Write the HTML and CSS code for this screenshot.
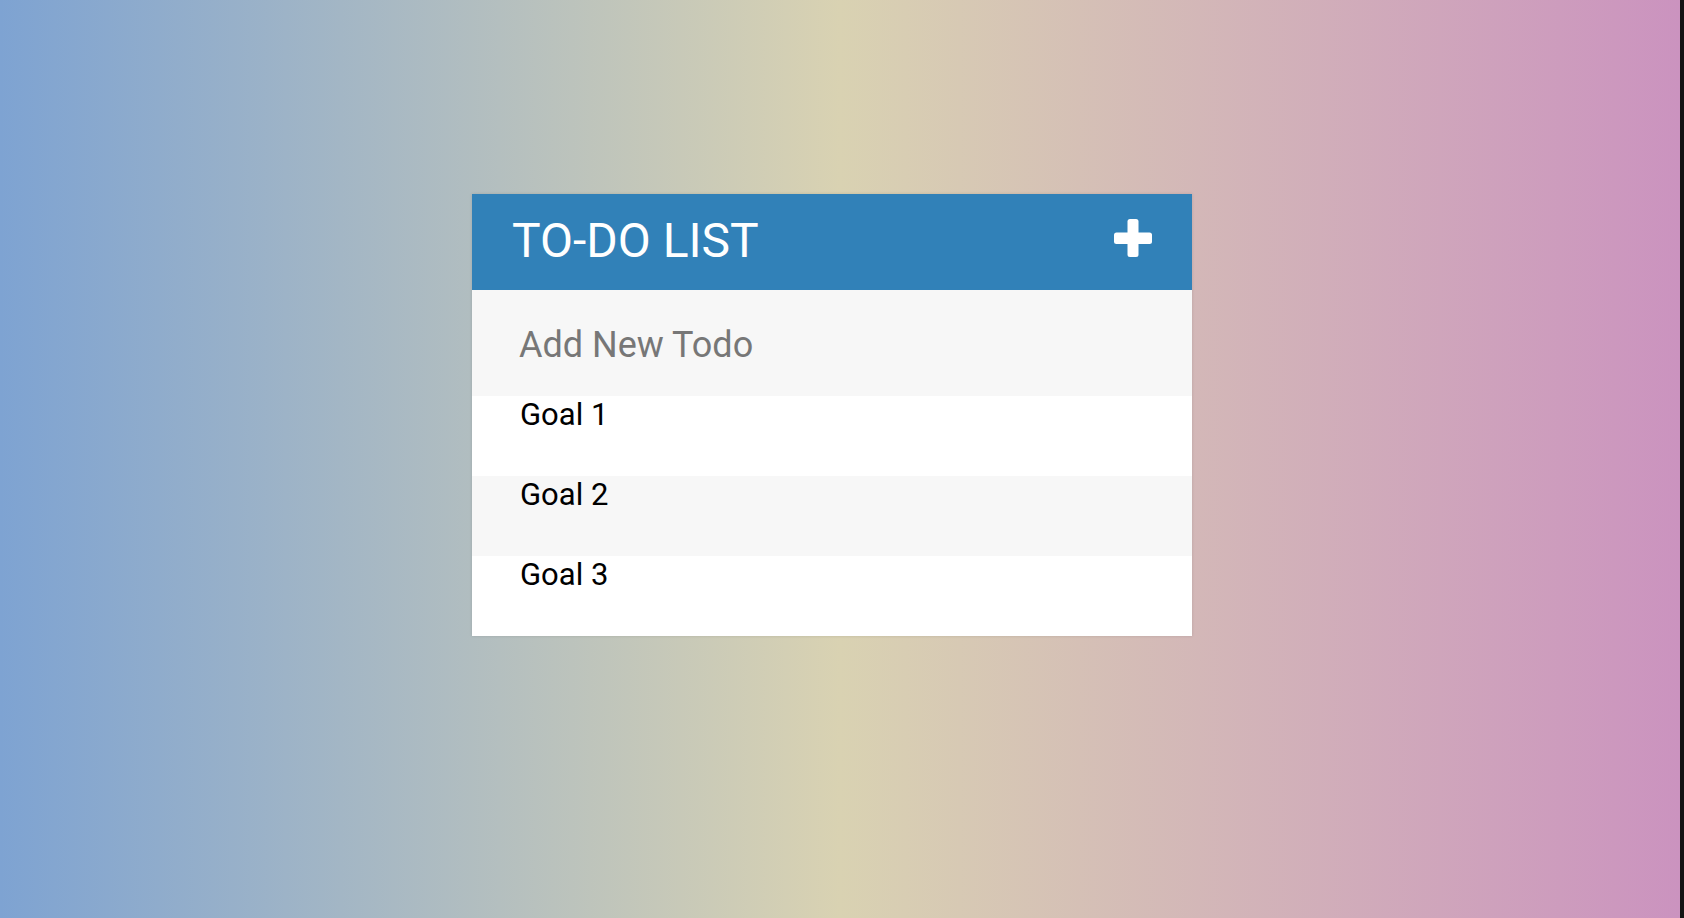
FILE: index.html
```html
<!DOCTYPE html>
<html lang="en">
<head>
<meta charset="utf-8">
<title>To-Do List</title>
<link rel="stylesheet" href="styles.css">
</head>
<body>
<div class="page">
  <main class="stage">
    <section class="card">
      <header class="card-header">
        <h1 class="title">TO-DO LIST</h1>
        <button class="add-btn" aria-label="Add">
          <svg width="38" height="38" viewBox="0 0 38 38">
            <rect x="13.5" y="0" width="11" height="38" rx="2.5" fill="#fff"/>
            <rect x="0" y="13.5" width="38" height="11.5" rx="2.5" fill="#fff"/>
          </svg>
        </button>
      </header>
      <div class="new-todo">
        <input class="new-input" type="text" placeholder="Add New Todo">
      </div>
      <ul class="todo-list">
        <li class="todo">Goal 1</li>
        <li class="todo">Goal 2</li>
        <li class="todo">Goal 3</li>
      </ul>
    </section>
  </main>
  <div class="edge"></div>
</div>
</body>
</html>
```

FILE: styles.css
```css
* { box-sizing: border-box; }
html, body { margin: 0; padding: 0; height: 100%; }
body {
  font-family: Roboto, "Liberation Sans", sans-serif;
  overflow: hidden;
}
.page {
  display: flex;
  height: 918px;
}
.stage {
  flex: 1;
  background: linear-gradient(to right, #7ea3d2 0%, #d9d2b2 50%, #cb93bf 100%);
  padding: 194px 0 0 472px;
}
.edge {
  width: 4px;
  background: #141414;
}
.card {
  width: 720px;
  background: #fff;
  box-shadow: 0 0 3px rgba(0,0,0,0.12);
}
.card-header {
  height: 96px;
  background: #3181b8;
  display: flex;
  align-items: center;
  justify-content: space-between;
  padding: 0 40px;
}
.title {
  margin: 0;
  color: #fff;
  font-weight: 400;
  font-size: 48px;
  line-height: 1;
  margin-top: -2px;
}
.add-btn {
  border: 0;
  padding: 0;
  background: none;
  display: flex;
  margin-top: -8px;
}
.new-todo {
  height: 106px;
  background: #f7f7f7;
  display: flex;
  align-items: center;
  padding: 4px 0 0 47px;
}
.new-input {
  border: 0;
  outline: none;
  background: transparent;
  font-family: Roboto, "Liberation Sans", sans-serif;
  font-size: 36px;
  color: #333;
  width: 100%;
  padding: 0;
}
.new-input::placeholder { color: #777; }
.todo-list {
  list-style: none;
  margin: 0;
  padding: 0;
}
.todo {
  height: 80px;
  padding-left: 48px;
  font-size: 31px;
  line-height: 38px;
  color: #000;
  background: #fff;
}
.todo:nth-child(even) { background: #f7f7f7; }
```
